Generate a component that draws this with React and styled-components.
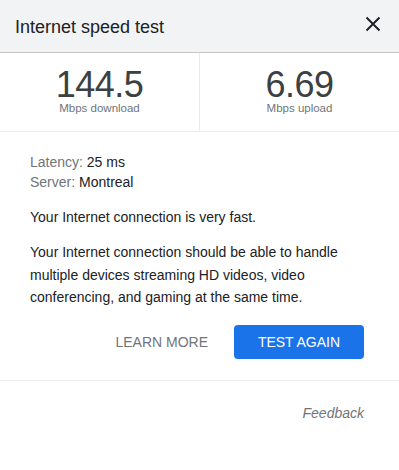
import styled, { createGlobalStyle } from "styled-components";

const GlobalStyle = createGlobalStyle`
  html, body {
    margin: 0;
    padding: 0;
    background: #ffffff;
  }
  body {
    font-family: "Liberation Sans", Arial, sans-serif;
  }
`;

const Card = styled.div`
  width: 399px;
  min-height: 470px;
  background: #ffffff;
`;

const Header = styled.div`
  height: 52px;
  display: flex;
  align-items: center;
  justify-content: space-between;
  padding: 0 14px 0 15px;
  background-color: #f1f3f4;
  border-bottom: 1px solid #c6c6c6;
  box-sizing: content-box;
`;

const Title = styled.h1`
  margin: 0;
  font-size: 18px;
  font-weight: 400;
  color: #202124;
  line-height: 20px;
  padding-top: 2px;
`;

const CloseButton = styled.button`
  width: 24px;
  height: 24px;
  padding: 0;
  border: none;
  background: transparent;
  display: flex;
  align-items: center;
  justify-content: center;
  margin-top: -4px;
  cursor: pointer;
`;

const Stats = styled.div`
  display: grid;
  grid-template-columns: 200px 1fr;
  height: 78px;
  border-bottom: 1px solid #ebebeb;
`;

const Stat = styled.div`
  display: flex;
  flex-direction: column;
  align-items: center;
  padding-top: 16px;
  border-right: ${(p) => (p.$divider ? "1px solid #ebebeb" : "none")};
`;

const Value = styled.div`
  font-size: 36px;
  line-height: 32px;
  color: #3c4043;
  letter-spacing: -0.5px;
`;

const Unit = styled.div`
  font-size: 11.5px;
  line-height: 12px;
  color: #70757a;
  margin-top: 1px;
`;

const Body = styled.div`
  padding: 20px 30px 0 30px;
`;

const InfoLine = styled.div`
  font-size: 14px;
  line-height: 20px;
  color: #202124;
`;

const Label = styled.span`
  color: #70757a;
`;

const Text = styled.p`
  margin: ${(p) => p.$mt}px 0 0 0;
  font-size: 14px;
  line-height: ${(p) => p.$lh}px;
  color: #202124;
`;

const Actions = styled.div`
  display: flex;
  justify-content: flex-end;
  align-items: center;
  gap: 26px;
  margin-top: 16px;
  padding-right: 5px;
`;

const TextButton = styled.button`
  border: none;
  background: transparent;
  padding: 0;
  font-family: inherit;
  font-size: 14px;
  color: #70757a;
  cursor: pointer;
`;

const PrimaryButton = styled.button`
  width: 130px;
  height: 34px;
  border: none;
  border-radius: 4px;
  background: #1a73e8;
  color: #ffffff;
  font-family: inherit;
  font-size: 14px;
  cursor: pointer;
`;

const Divider = styled.div`
  height: 1px;
  background: #ebebeb;
  margin-top: 21px;
`;

const Footer = styled.div`
  display: flex;
  justify-content: flex-end;
  padding: 22px 35px 0 0;
`;

const FeedbackLink = styled.span`
  font-size: 14px;
  font-style: italic;
  color: #70757a;
  line-height: 20px;
`;

function CloseIcon() {
  return (
    <svg width="24" height="24" viewBox="0 0 24 24" aria-hidden="true">
      <path
        d="M5.5 5.5 L18.5 18.5 M18.5 5.5 L5.5 18.5"
        stroke="#202124"
        strokeWidth="2"
        fill="none"
      />
    </svg>
  );
}

export default function App() {
  return (
    <>
      <GlobalStyle />
      <Card>
        <Header>
          <Title>Internet speed test</Title>
          <CloseButton aria-label="Close">
            <CloseIcon />
          </CloseButton>
        </Header>
        <Stats>
          <Stat $divider>
            <Value>144.5</Value>
            <Unit>Mbps download</Unit>
          </Stat>
          <Stat>
            <Value>6.69</Value>
            <Unit>Mbps upload</Unit>
          </Stat>
        </Stats>
        <Body>
          <InfoLine>
            <Label>Latency:</Label> 25 ms
          </InfoLine>
          <InfoLine>
            <Label>Server:</Label> Montreal
          </InfoLine>
          <Text $mt={15} $lh={20}>
            Your Internet connection is very fast.
          </Text>
          <Text $mt={14} $lh={22.5}>
            Your Internet connection should be able to handle multiple devices
            streaming HD videos, video conferencing, and gaming at the same
            time.
          </Text>
          <Actions>
            <TextButton>LEARN MORE</TextButton>
            <PrimaryButton>TEST AGAIN</PrimaryButton>
          </Actions>
        </Body>
        <Divider />
        <Footer>
          <FeedbackLink>Feedback</FeedbackLink>
        </Footer>
      </Card>
    </>
  );
}
